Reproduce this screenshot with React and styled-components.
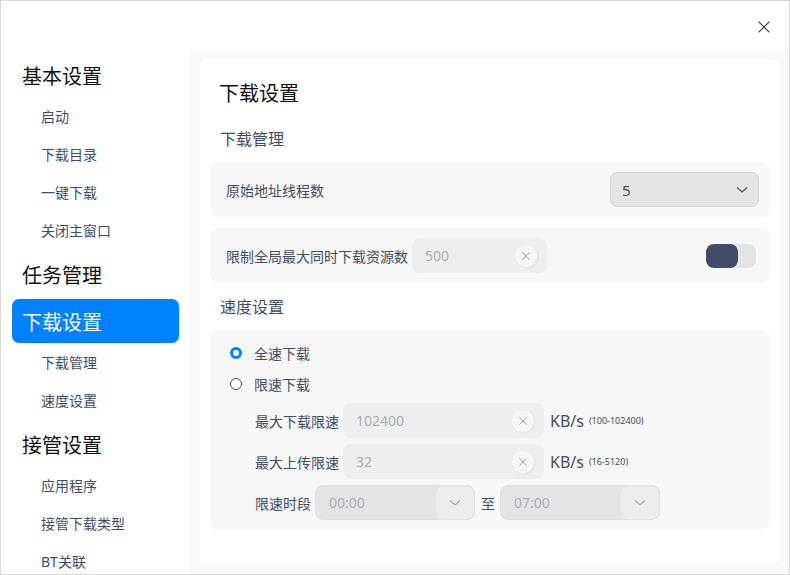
import React from 'react';
import styled, { createGlobalStyle } from 'styled-components';

const FONT = `"Noto Sans", "Noto Sans CJK SC", sans-serif`;
const INK = '#414d68';

const Global = createGlobalStyle`
  html, body { margin: 0; padding: 0; background: #fff; }
  * { box-sizing: border-box; }
`;

const Window = styled.div`
  width: 790px;
  height: 575px;
  border: 1px solid #d9d9d9;
  display: flex;
  flex-direction: column;
  overflow: hidden;
  font-family: ${FONT};
  background: #fff;
`;

const TitleBar = styled.div`
  height: 49px;
  flex: none;
  display: flex;
  justify-content: flex-end;
  align-items: center;
  padding: 2px 18px 0 0;
`;

const CloseBtn = styled.div`
  width: 14px;
  height: 14px;
  display: flex;
  align-items: center;
  justify-content: center;
`;

const Body = styled.div`
  flex: 1;
  display: flex;
  min-height: 0;
`;

const Sidebar = styled.div`
  width: 189px;
  flex: none;
  background: #fff;
  overflow: hidden;
`;

const Heading = styled.div`
  height: 44px;
  margin: 3px 11px 0 11px;
  padding-left: 10px;
  display: flex;
  align-items: center;
  font-size: 20px;
  color: ${p => (p.active ? '#fff' : '#111')};
  background: ${p => (p.active ? '#0081ff' : 'transparent')};
  border-radius: 7px;
`;

const Item = styled.div`
  height: 38px;
  padding-left: 40px;
  display: flex;
  align-items: center;
  font-size: 14px;
  color: ${INK};
`;

const Main = styled.div`
  flex: 1;
  background: #f8f8f8;
  padding: 9px 9px 10px 10px;
  display: flex;
`;

const Card = styled.div`
  flex: 1;
  background: #fff;
  border-radius: 8px;
  padding: 20px 10px 0 10px;
`;

const Title = styled.div`
  font-size: 20px;
  line-height: 30px;
  color: #111;
  padding-left: 9px;
`;

const Sub = styled.div`
  font-size: 16px;
  line-height: 28px;
  color: ${INK};
  padding-left: 10px;
  margin-top: ${p => p.top}px;
  margin-bottom: ${p => p.bottom}px;
`;

const Row = styled.div`
  height: 55px;
  background: #f7f7f7;
  border-radius: 8px;
  display: flex;
  align-items: center;
  padding: 0 ${p => p.right}px 0 16px;
  margin-bottom: ${p => p.bottom || 0}px;
`;

const Label = styled.span`
  font-size: 14px;
  color: ${INK};
  white-space: nowrap;
  margin-right: 4px;
`;

const Spacer = styled.div`
  flex: 1;
`;

const Select = styled.div`
  width: ${p => p.w}px;
  height: 35px;
  background: #e4e4e4;
  border: 1px solid #d5d5d5;
  border-radius: 7px;
  display: flex;
  align-items: center;
  justify-content: space-between;
  padding: 0 10px 0 11px;
  font-size: 15px;
  color: ${INK};
`;

const Input = styled.div`
  width: ${p => p.w}px;
  height: 35px;
  background: #eeeeee;
  border-radius: 8px;
  display: flex;
  align-items: center;
  justify-content: space-between;
  padding: 0 5px 0 13px;
  font-size: 14px;
  color: #a9adb5;
`;

const ClearBtn = styled.div`
  width: 22px;
  height: 22px;
  border-radius: 50%;
  background: #f6f6f6;
  box-shadow: 1px 1px 3px rgba(0, 0, 0, 0.06);
  display: flex;
  align-items: center;
  justify-content: center;
  margin-right: 5px;
`;

const Toggle = styled.div`
  width: 50px;
  height: 24px;
  border-radius: 8px;
  background: #e3e3e3;
  display: flex;
`;

const Knob = styled.div`
  width: 32px;
  height: 24px;
  border-radius: 8px;
  background: #414c68;
`;

const Panel = styled.div`
  background: #f7f7f7;
  border-radius: 8px;
  padding: 11px 16px 10px 20px;
  display: flex;
  flex-direction: column;
`;

const RadioLine = styled.div`
  height: 24px;
  display: flex;
  align-items: center;
  gap: 12px;
  font-size: 14px;
  color: ${INK};
  margin-bottom: 7px;
`;

const Radio = styled.span`
  width: 12px;
  height: 12px;
  border-radius: 50%;
  border: ${p => (p.on ? '3px solid #0081ff' : `1px solid ${INK}`)};
  background: #fff;
  flex: none;
`;

const FieldLine = styled.div`
  display: flex;
  align-items: center;
  padding-left: 25px;
  margin-top: ${p => (p.first ? 0 : 6)}px;
`;

const Unit = styled.span`
  font-size: 16px;
  color: ${INK};
  margin-left: 6px;
`;

const Range = styled.span`
  font-size: 9px;
  color: ${INK};
  margin-left: 5px;
`;

const TimeSelect = styled.div`
  width: 160px;
  height: 35px;
  background: #e4e4e4;
  border: 1px solid #e0e0e0;
  border-radius: 8px;
  display: flex;
  align-items: center;
  font-size: 14px;
  color: #a9adb5;
`;

const TimeText = styled.span`
  flex: 1;
  padding-left: 13px;
`;

const ArrowBox = styled.div`
  width: 38px;
  height: 33px;
  background: #ececec;
  border-radius: 8px;
  display: flex;
  align-items: center;
  justify-content: center;
`;

const To = styled.span`
  font-size: 14px;
  color: ${INK};
  margin: 0 5px 0 6px;
`;

const Chevron = ({ color = INK }) => (
  <svg width="12" height="8" viewBox="0 0 12 8">
    <path d="M1 1.5 L6 6 L11 1.5" fill="none" stroke={color} strokeWidth="1.2" />
  </svg>
);

const Cross = ({ size = 8, color = '#9a9a9a', w = 1.1 }) => (
  <svg width={size} height={size} viewBox="0 0 10 10">
    <path d="M0.5 0.5 L9.5 9.5 M9.5 0.5 L0.5 9.5" stroke={color} strokeWidth={w} fill="none" />
  </svg>
);

const menu = [
  { title: '基本设置', items: ['启动', '下载目录', '一键下载', '关闭主窗口'] },
  { title: '任务管理', items: [] },
  { title: '下载设置', items: ['下载管理', '速度设置'], active: true },
  { title: '接管设置', items: ['应用程序', '接管下载类型', 'BT关联'] },
];

export default function App() {
  return (
    <>
      <Global />
      <Window>
        <TitleBar>
          <CloseBtn>
            <Cross size={12} color="#2c3550" w={1} />
          </CloseBtn>
        </TitleBar>
        <Body>
          <Sidebar>
            {menu.map(g => (
              <React.Fragment key={g.title}>
                <Heading active={g.active}>{g.title}</Heading>
                {g.items.map(i => (
                  <Item key={i}>{i}</Item>
                ))}
              </React.Fragment>
            ))}
          </Sidebar>
          <Main>
            <Card>
              <Title>下载设置</Title>
              <Sub top={16} bottom={9}>下载管理</Sub>
              <Row right={11} bottom={11}>
                <Label>原始地址线程数</Label>
                <Spacer />
                <Select w={149}>
                  <span>5</span>
                  <Chevron />
                </Select>
              </Row>
              <Row right={14}>
                <Label>限制全局最大同时下载资源数</Label>
                <Input w={135}>
                  <span>500</span>
                  <ClearBtn>
                    <Cross />
                  </ClearBtn>
                </Input>
                <Spacer />
                <Toggle>
                  <Knob />
                </Toggle>
              </Row>
              <Sub top={10} bottom={9}>速度设置</Sub>
              <Panel>
                <RadioLine>
                  <Radio on />
                  全速下载
                </RadioLine>
                <RadioLine>
                  <Radio />
                  限速下载
                </RadioLine>
                <FieldLine first>
                  <Label>最大下载限速</Label>
                  <Input w={201}>
                    <span>102400</span>
                    <ClearBtn>
                      <Cross />
                    </ClearBtn>
                  </Input>
                  <Unit>KB/s</Unit>
                  <Range>(100-102400)</Range>
                </FieldLine>
                <FieldLine>
                  <Label>最大上传限速</Label>
                  <Input w={201}>
                    <span>32</span>
                    <ClearBtn>
                      <Cross />
                    </ClearBtn>
                  </Input>
                  <Unit>KB/s</Unit>
                  <Range>(16-5120)</Range>
                </FieldLine>
                <FieldLine>
                  <Label>限速时段</Label>
                  <TimeSelect>
                    <TimeText>00:00</TimeText>
                    <ArrowBox>
                      <Chevron color="#a3a8b2" />
                    </ArrowBox>
                  </TimeSelect>
                  <To>至</To>
                  <TimeSelect>
                    <TimeText>07:00</TimeText>
                    <ArrowBox>
                      <Chevron color="#a3a8b2" />
                    </ArrowBox>
                  </TimeSelect>
                </FieldLine>
              </Panel>
            </Card>
          </Main>
        </Body>
      </Window>
    </>
  );
}
